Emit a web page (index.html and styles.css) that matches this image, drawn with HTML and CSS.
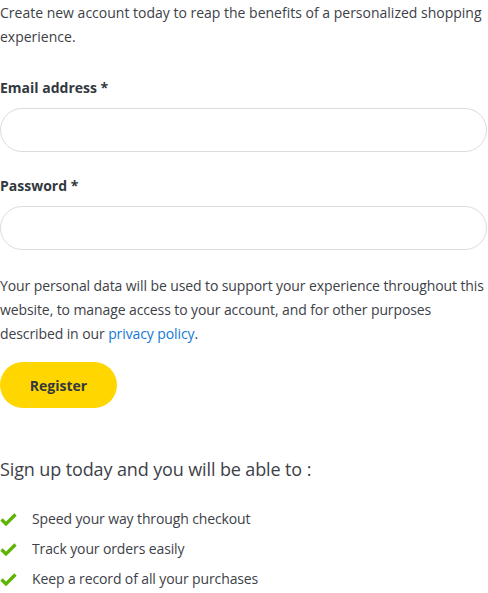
FILE: index.html
```html
<!DOCTYPE html>
<html>
<head>
<meta charset="utf-8">
<link rel="stylesheet" href="styles.css">
</head>
<body>
<div class="page">
  <p class="intro">Create new account today to reap the benefits of a personalized shopping experience.</p>
  <form class="form">
    <label class="label" for="email">Email address *</label>
    <input class="input" id="email" type="email">
    <label class="label label-pw" for="pw">Password *</label>
    <input class="input" id="pw" type="password">
    <p class="privacy">Your personal data will be used to support your experience throughout this website, to manage access to your account, and for other purposes described in our <a href="#" class="link">privacy policy</a>.</p>
    <button type="button" class="btn">Register</button>
  </form>
  <h2 class="heading">Sign up today and you will be able to :</h2>
  <ul class="list">
    <li class="item"><svg class="check" width="17" height="13" viewBox="0 0 17 13"><path d="M1.5 6.5 L6 11 L15.5 1.5" fill="none" stroke="#5cb400" stroke-width="3.2"/></svg>Speed your way through checkout</li>
    <li class="item"><svg class="check" width="17" height="13" viewBox="0 0 17 13"><path d="M1.5 6.5 L6 11 L15.5 1.5" fill="none" stroke="#5cb400" stroke-width="3.2"/></svg>Track your orders easily</li>
    <li class="item"><svg class="check" width="17" height="13" viewBox="0 0 17 13"><path d="M1.5 6.5 L6 11 L15.5 1.5" fill="none" stroke="#5cb400" stroke-width="3.2"/></svg>Keep a record of all your purchases</li>
  </ul>
</div>
</body>
</html>
```
FILE: styles.css
```css
html, body {
  margin: 0;
  padding: 0;
  background: #fff;
}
body {
  font-family: "Open Sans", "Liberation Sans", sans-serif;
  font-size: 14px;
  line-height: 24px;
  color: #3d4148;
}
.page {
  padding-top: 1px;
}
.intro {
  margin: 0;
}
.form {
  display: flex;
  flex-direction: column;
  align-items: flex-start;
}
.label {
  display: block;
  font-weight: 700;
  color: #333840;
  margin-top: 27px;
  margin-bottom: 8px;
}
.label-pw {
  margin-top: 22px;
}
.input {
  box-sizing: border-box;
  width: 487px;
  height: 44px;
  border: 1px solid #dcdcdc;
  border-radius: 22px;
  padding: 0 20px;
  font: inherit;
  outline: none;
  margin: 0;
}
.privacy {
  margin: 24px 0 0;
  letter-spacing: -0.1px;
}
.link {
  color: #1479d6;
  text-decoration: none;
}
.btn {
  margin-top: 16px;
  width: 117px;
  height: 46px;
  border: none;
  border-radius: 23px;
  background: #ffd600;
  color: #333840;
  font-family: inherit;
  font-size: 14px;
  font-weight: 700;
  padding: 0;
  cursor: pointer;
}
.heading {
  margin: 48px 0 0;
  font-size: 18px;
  line-height: 27px;
  font-weight: 400;
  letter-spacing: -0.12px;
  color: #3d4148;
}
.list {
  list-style: none;
  margin: 21px 0 0;
  padding: 0;
  letter-spacing: -0.12px;
}
.item {
  display: flex;
  align-items: center;
  height: 30px;
  line-height: 30px;
}
.check {
  flex: none;
  margin-right: 15px;
}
```
